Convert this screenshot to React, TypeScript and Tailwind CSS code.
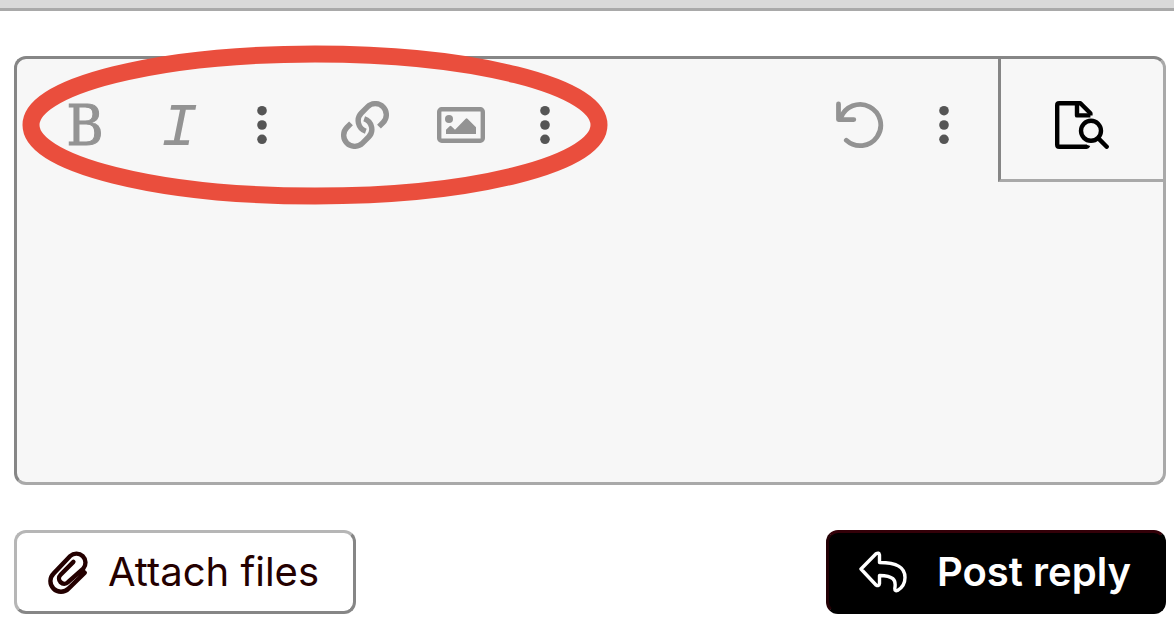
import type { ReactNode } from "react";

// ─── Icons ───────────────────────────────────────────────────────────────────

const DotsIcon = () => (
  <svg width="10" height="40" viewBox="0 0 10 40" fill="currentColor" aria-hidden="true">
    <circle cx="5" cy="5.7" r="4.8" />
    <circle cx="5" cy="20" r="4.8" />
    <circle cx="5" cy="34.3" r="4.8" />
  </svg>
);

const LinkIcon = () => (
  <svg width="48" height="48" viewBox="0 0 48 48" fill="none" stroke="currentColor" strokeWidth="5.4" aria-hidden="true">
    <path d="M24.8 30.2A11 11 0 0 1 20.4 12L26.5 5.9A11 11 0 0 1 42.1 21.5L38 25.6" />
    <path d="M23.2 17.8A11 11 0 0 1 27.6 36L21.5 42.1A11 11 0 0 1 5.9 26.5L10 22.4" />
  </svg>
);

const ImageIcon = () => (
  <svg width="48" height="36" viewBox="0 0 48 36" aria-hidden="true">
    <rect x="2.2" y="2.2" width="43.6" height="31.6" rx="2.5" fill="none" stroke="currentColor" strokeWidth="4.4" />
    <circle cx="12" cy="12" r="4" fill="currentColor" />
    <path d="M9 27V22.8L12.6 19.2Q13.5 18.5 14.4 19.2L18 22.8L28.7 11.7Q29.6 11 30.5 11.7L39 20.2V27Z" fill="currentColor" />
  </svg>
);

const UndoIcon = () => (
  <svg width="48" height="48" viewBox="0 0 48 48" fill="none" stroke="currentColor" strokeWidth="4.8" strokeLinecap="round" strokeLinejoin="round" aria-hidden="true">
    <path d="M4.8 17A20.6 20.6 0 1 1 10.3 39.3" />
    <path d="M2.5 3V18.6H17.8" />
  </svg>
);

const PreviewIcon = () => (
  <svg width="54" height="48" viewBox="0 0 54 48" fill="none" stroke="currentColor" strokeWidth="4.4" strokeLinejoin="round" aria-hidden="true">
    <path d="M35.4 14.4V12.2L25.4 2.2H4.2Q2.2 2.2 2.2 4.2V43.8Q2.2 45.8 4.2 45.8H31.5" />
    <path d="M22 2.2V14.4H35.4" />
    <path d="M31 43.6L35.2 45Q34 48 31 48Z" fill="currentColor" stroke="none" />
    <circle cx="36" cy="29.8" r="10" />
    <path d="M43.4 37.4L51.7 45.7" strokeLinecap="round" />
  </svg>
);

const PaperclipIcon = () => (
  <svg width="40" height="43" viewBox="0 0 40 43" fill="none" stroke="currentColor" strokeWidth="4.4" strokeLinecap="round" aria-hidden="true">
    <path d="M36.8 21.7L20.5 37.6A10.5 10.5 0 0 1 5.5 22.6L22.2 5A9.1 9.1 0 0 1 35.2 17.7L20 31.2A5.2 5.2 0 0 1 12.6 23.7L25.4 10.9" />
  </svg>
);

const ReplyIcon = () => (
  <svg width="48" height="42" viewBox="0 0 48 42" fill="none" stroke="currentColor" strokeWidth="3.4" strokeLinejoin="round" aria-hidden="true">
    <path d="M2 18L17 2.8Q20 1 20.5 4V11.5C36 11.5 46 15 46 26.5C46 33 42 37.5 38.5 39.5Q35.8 40.5 35.8 37.5C37.5 28 34 25 20.5 24.5V32.5Q20 35.8 17 34Z" />
  </svg>
);

// ─── Toolbar ─────────────────────────────────────────────────────────────────

interface ToolButtonProps {
  label: string;
  className: string;
  children: ReactNode;
}

const ToolButton = ({ label, className, children }: ToolButtonProps) => (
  <button type="button" aria-label={label} className={`flex h-full shrink-0 items-center justify-center ${className}`}>
    {children}
  </button>
);

const Toolbar = () => (
  <div role="toolbar" aria-label="Formatting" className="flex h-[123px] items-start text-[#939393]">
    <div className="relative flex h-[132px] items-center pl-[21px]">
      <ToolButton label="Bold" className="w-[94px] pt-0.5">
        <span className="font-['DejaVu_Serif_Condensed','DejaVu_Serif',serif] text-[56px] leading-none [-webkit-text-stroke:1px_#939393]">B</span>
      </ToolButton>
      <ToolButton label="Italic" className="w-[94px] pt-2">
        <span className="font-['Liberation_Mono',monospace] text-[62px] leading-none italic">I</span>
      </ToolButton>
      <ToolButton label="More text options" className="w-[72px] text-[#555555]"><DotsIcon /></ToolButton>
      <ToolButton label="Insert link" className="ml-[19px] w-24"><LinkIcon /></ToolButton>
      <ToolButton label="Insert image" className="w-24"><ImageIcon /></ToolButton>
      <ToolButton label="More insert options" className="w-[72px] text-[#555555]"><DotsIcon /></ToolButton>

      {/* Red ring around the formatting group */}
      <svg
        className="pointer-events-none absolute left-[5px] top-[-14px]"
        width="586" height="160" viewBox="0 0 586 160" fill="none" aria-hidden="true"
      >
        <ellipse cx="293" cy="80" rx="284" ry="71" stroke="#ea4e3d" strokeWidth="17" />
      </svg>
    </div>

    <div className="ml-auto flex h-[132px] items-center pr-[18px]">
      <ToolButton label="Undo" className="w-24"><UndoIcon /></ToolButton>
      <ToolButton label="More actions" className="w-[72px] text-[#555555]"><DotsIcon /></ToolButton>
    </div>

    <button
      type="button"
      aria-label="Preview"
      className="flex h-full w-[165px] shrink-0 items-center justify-center border-b-[3px] border-l-[3px] border-b-[#a9a9a9] border-l-[#868686] pt-3 text-black"
    >
      <PreviewIcon />
    </button>
  </div>
);

// ─── App ─────────────────────────────────────────────────────────────────────

const App = () => (
  <div className="bg-white font-['Inter','Open_Sans',sans-serif]">
    <div className="h-[11px] border-b-[3px] border-[#a9a9a9] bg-[#d9d9d9]" />

    <form className="pt-[45px] pr-2 pb-7 pl-3.5" onSubmit={(e) => e.preventDefault()}>
      <div className="rounded-xl border-[3px] border-t-[#868686] border-r-[#a9a9a9] border-b-[#a9a9a9] border-l-[#868686] bg-[#f7f7f7]">
        <Toolbar />
        <textarea
          aria-label="Reply"
          className="block h-[300px] w-full resize-none bg-transparent px-6 py-4 text-4xl text-black outline-none"
        />
      </div>

      <div className="mt-[45px] flex items-center justify-between">
        <button
          type="button"
          className="flex h-[84px] min-w-[342px] items-center gap-5 rounded-xl border-[3px] border-t-[#b6b6b6] border-r-[#868686] border-b-[#868686] border-l-[#b6b6b6] px-[31px] text-[40px] text-[#240000]"
        >
          <PaperclipIcon />
          Attach files
        </button>
        <button
          type="submit"
          className="flex h-[84px] min-w-[340px] items-center gap-[30px] rounded-xl border-[3px] border-t-[#330008] border-r-black border-b-black border-l-[#240005] bg-black px-[30px] text-[40px] font-semibold text-white"
        >
          <ReplyIcon />
          Post reply
        </button>
      </div>
    </form>
  </div>
);

export default App;
